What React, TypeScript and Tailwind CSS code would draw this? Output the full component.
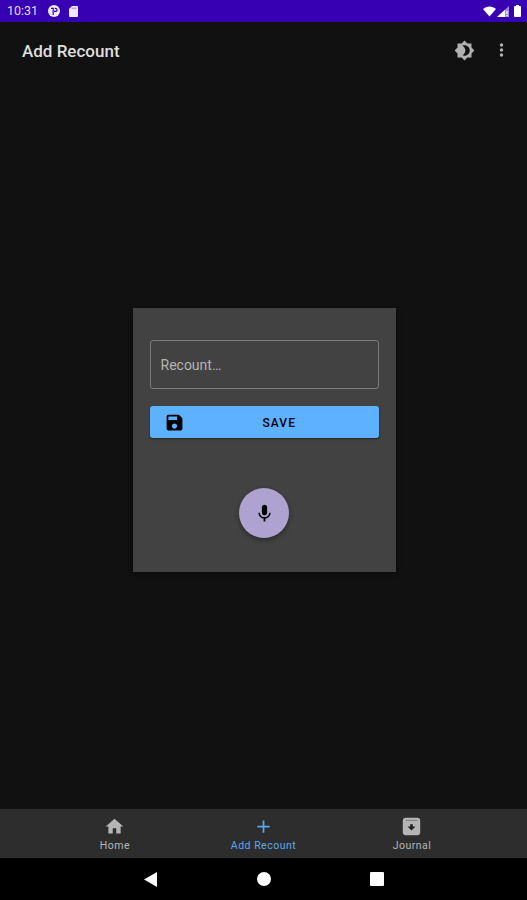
import type { ComponentType } from "react";
import { MdAdd, MdBrightness4, MdHome, MdMic, MdMoreVert, MdSave } from "react-icons/md";

interface Tab {
  label: string;
  icon: ComponentType<{ className?: string }>;
  active?: boolean;
}

function JournalIcon({ className }: { className?: string }) {
  return (
    <svg className={className} viewBox="0 0 21 21">
      <rect x="1.8" y="1.8" width="17.4" height="17.4" rx="3" fill="currentColor" />
      <path d="M4.5 4.4h12" stroke="#777" strokeWidth=".9" />
      <path d="M9.2 8.2h2.6v2.3h2.7L10.5 14.4l-4-3.9h2.7z" fill="#222" />
    </svg>
  );
}

const tabs: Tab[] = [
  { label: "Home", icon: MdHome },
  { label: "Add Recount", icon: MdAdd, active: true },
  { label: "Journal", icon: JournalIcon },
];

function StatusBar() {
  return (
    <div className="flex h-[22px] shrink-0 items-center bg-[#3700b3] pl-[7px] pr-[6px] text-white">
      <span className="w-[41px] text-[12.5px] leading-none text-[#e4dcf6]">10:31</span>
      <svg className="h-3 w-3" viewBox="0 0 12 12">
        <circle cx="6" cy="6" r="6" fill="#eeeaf9" />
        <path d="M3 3.4h2.2V10M6.6 3.4h.9a1.5 1.5 0 0 1 0 3H6" fill="none" stroke="#3700b3" strokeWidth="1.2" />
      </svg>
      <svg className="ml-[9px] h-[11px] w-[9px]" viewBox="0 0 9 11">
        <path d="M3 0h5a1 1 0 0 1 1 1v9a1 1 0 0 1-1 1H1a1 1 0 0 1-1-1V3z" fill="#eeeaf9" />
        <path d="M3.2 1.5v1.6M5 1.5v1.6M6.8 1.5v1.6" stroke="#3700b3" strokeWidth=".5" />
      </svg>
      <div className="ml-auto flex items-center">
        <svg className="h-[11px] w-[13px]" viewBox="0 0 14 11">
          <path d="M0 2.7C4-.9 10-.9 14 2.7L7 11z" fill="#fff" />
        </svg>
        <svg className="ml-px h-[11px] w-3" viewBox="0 0 12 11">
          <path d="M12 0v11H0z" fill="#a58add" />
          <path d="M8 3.7V11H0z" fill="#fff" />
          <path d="M10 5v3M10 9v1.2" stroke="#fff" strokeWidth="1.2" />
        </svg>
        <svg className="ml-[5px] h-3 w-[7px]" viewBox="0 0 7 12">
          <path d="M2 0h3v1h1a1 1 0 0 1 1 1v9a1 1 0 0 1-1 1H1a1 1 0 0 1-1-1V2a1 1 0 0 1 1-1h1z" fill="#fff" />
        </svg>
      </div>
    </div>
  );
}

function SystemNav() {
  return (
    <div className="flex h-[42px] shrink-0 items-center bg-black pl-[144px]">
      <svg className="h-[15px] w-[13px]" viewBox="0 0 13 15">
        <path d="M13 0v15L0 7.5z" fill="#fff" />
      </svg>
      <div className="ml-[100px] h-[14px] w-[14px] rounded-full bg-white" />
      <div className="ml-[98.5px] h-[14px] w-[14px] rounded-[1px] bg-white" />
    </div>
  );
}

export default function App() {
  return (
    <div className="flex h-[900px] w-[527px] flex-col overflow-hidden bg-[#111111] font-['Roboto',sans-serif]">
      <StatusBar />

      <header className="flex h-14 shrink-0 items-center pl-[22px] pr-[15px]">
        <h1 className="pt-[3px] text-[17px] font-medium leading-none text-[#dedede]">Add Recount</h1>
        <button className="ml-auto text-[#b0b0b0]">
          <MdBrightness4 className="h-[21px] w-[21px]" />
        </button>
        <button className="ml-4 text-[#b0b0b0]">
          <MdMoreVert className="h-5 w-[21px]" />
        </button>
      </header>

      <main className="flex flex-1 flex-col pl-[132.5px] pt-[230px]">
        <div className="flex h-[264px] w-[263.5px] flex-col items-center bg-[#424242] pt-8 shadow-[0_1px_4px_rgba(0,0,0,0.6)]">
          <input
            type="text"
            placeholder="Recount…"
            className="h-[49px] w-[228.5px] rounded-[3px] border border-[#7c7c7c] bg-transparent px-[9.5px] text-[14px] text-[#b8b8b8] outline-none placeholder:text-[#b4b4b4]"
          />
          <button className="mt-[17px] flex h-8 w-[228.5px] items-center rounded-[3px] bg-[#5eb1ff] pl-[14px] text-black shadow-[0_1px_2px_rgba(0,0,0,0.5)]">
            <MdSave className="h-[21px] w-[21px]" />
            <span className="flex-1 pr-[5px] pt-px text-center text-[12px] font-medium tracking-[1.1px]">SAVE</span>
          </button>
          <button className="mt-[50px] flex h-[50px] w-[50px] items-center justify-center rounded-full bg-[#aea3d0] text-black shadow-[0_2px_5px_rgba(0,0,0,0.4)]">
            <MdMic className="h-[21px] w-[21px]" />
          </button>
        </div>
      </main>

      <nav className="flex h-[49px] shrink-0 justify-center bg-[#2d2d2d] pr-px">
        {tabs.map(({ label, icon: Icon, active }) => (
          <div
            key={label}
            className={`flex w-[148.5px] flex-col items-center pt-[7px] ${active ? "text-[#5ba8ee]" : "text-[#b5b5b5]"}`}
          >
            <Icon className="h-[21px] w-[21px]" />
            <span className="mt-[3px] pl-px text-[10.5px] leading-3 tracking-[0.5px]">{label}</span>
          </div>
        ))}
      </nav>

      <SystemNav />
    </div>
  );
}
